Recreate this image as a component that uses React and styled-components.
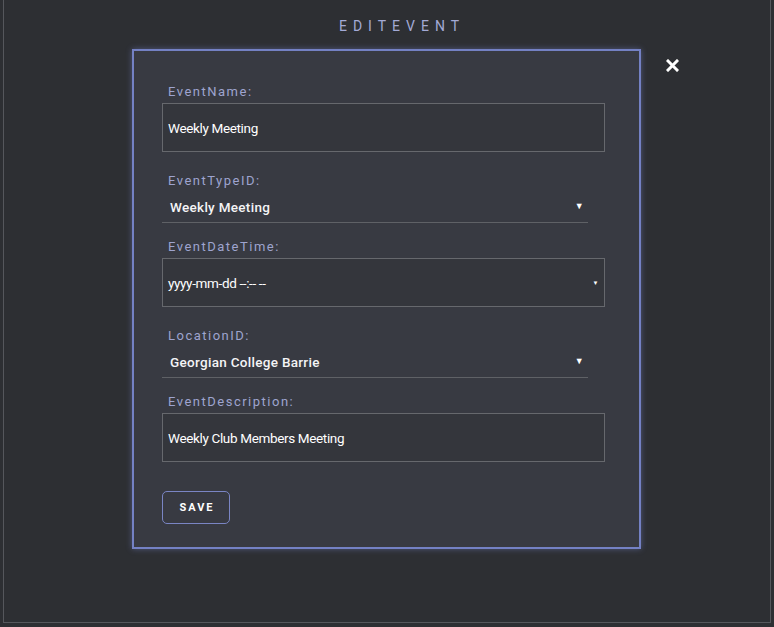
import React from 'react';
import styled, { createGlobalStyle } from 'styled-components';

const GlobalStyle = createGlobalStyle`
  html, body {
    margin: 0;
    padding: 0;
    background: #2d2f33;
  }
  body {
    font-family: Roboto, "Liberation Sans", sans-serif;
  }
`;

const Frame = styled.div`
  margin: 0 3px 0 3px;
  height: 623px;
  box-sizing: border-box;
  border: 1px solid #55575c;
  border-top: none;
  padding-top: 17px;
`;

const Title = styled.h2`
  margin: 0;
  text-align: center;
  padding-left: 30px;
  font-size: 14px;
  line-height: 18px;
  font-weight: 400;
  letter-spacing: 6px;
  color: #a3aad6;
`;

const Row = styled.div`
  display: flex;
  align-items: flex-start;
  margin-top: 14px;
  padding-left: 128px;
`;

const Card = styled.form`
  width: 509px;
  height: 500px;
  box-sizing: border-box;
  background: #383a42;
  border: 2px solid #7481c4;
  box-shadow: 0 0 6px rgba(125, 140, 215, 0.45);
  padding: 33px 34px 0 28px;
`;

const Field = styled.div`
  margin-bottom: ${p => p.$after}px;
`;

const Label = styled.label`
  display: block;
  padding-left: 6px;
  margin-bottom: 4px;
  font-size: 13px;
  line-height: 15px;
  letter-spacing: 1.5px;
  color: #9ea4cf;
`;

const TextBox = styled.div`
  display: flex;
  align-items: center;
  justify-content: space-between;
  height: 49px;
  box-sizing: border-box;
  border: 1px solid #66686d;
  background: #34363c;
  padding: 0 6px 0 5px;
  font-size: 13.5px;
  color: #ffffff;
  letter-spacing: -0.35px;
`;

const Select = styled.div`
  display: flex;
  align-items: center;
  justify-content: space-between;
  width: 426px;
  height: ${p => p.$h}px;
  box-sizing: border-box;
  border-bottom: 1px solid #5f6166;
  padding: 0 4px 1px 8px;
  font-size: 13.5px;
  font-weight: 500;
  letter-spacing: 0.3px;
  color: #f4f4f6;
`;

const Arrow = styled.span`
  font-size: ${p => p.$size}px;
  color: #ffffff;
  line-height: 1;
`;

const SaveButton = styled.button`
  width: 68px;
  height: 33px;
  background: transparent;
  border: 1px solid #7a85c4;
  border-radius: 5px;
  color: #ffffff;
  font-family: Roboto, "Liberation Sans", sans-serif;
  font-size: 11px;
  font-weight: 700;
  letter-spacing: 2px;
  padding: 0 0 0 2px;
  cursor: pointer;
`;

const Close = styled.button`
  margin: 10px 0 0 25px;
  width: 13px;
  height: 13px;
  padding: 0;
  background: none;
  border: none;
  display: flex;
  cursor: pointer;
`;

const App = () => {
  return (
    <>
      <GlobalStyle />
      <Frame>
        <Title>EDITEVENT</Title>
        <Row>
          <Card onSubmit={e => e.preventDefault()}>
            <Field $after={21}>
              <Label>EventName:</Label>
              <TextBox>Weekly Meeting</TextBox>
            </Field>
            <Field $after={16}>
              <Label>EventTypeID:</Label>
              <Select $h={31}>
                <span>Weekly Meeting</span>
                <Arrow $size={9}>▼</Arrow>
              </Select>
            </Field>
            <Field $after={21}>
              <Label>EventDateTime:</Label>
              <TextBox>
                <span>yyyy-mm-dd --:-- --</span>
                <Arrow $size={6}>▼</Arrow>
              </TextBox>
            </Field>
            <Field $after={16}>
              <Label>LocationID:</Label>
              <Select $h={31}>
                <span>Georgian College Barrie</span>
                <Arrow $size={9}>▼</Arrow>
              </Select>
            </Field>
            <Field $after={29}>
              <Label>EventDescription:</Label>
              <TextBox>Weekly Club Members Meeting</TextBox>
            </Field>
            <SaveButton type="submit">SAVE</SaveButton>
          </Card>
          <Close type="button" aria-label="close">
            <svg width="13" height="13" viewBox="0 0 13 13">
              <path d="M2 2 L11 11 M11 2 L2 11" stroke="#ffffff" strokeWidth="3" strokeLinecap="square" />
            </svg>
          </Close>
        </Row>
      </Frame>
    </>
  );
};

export default App;
